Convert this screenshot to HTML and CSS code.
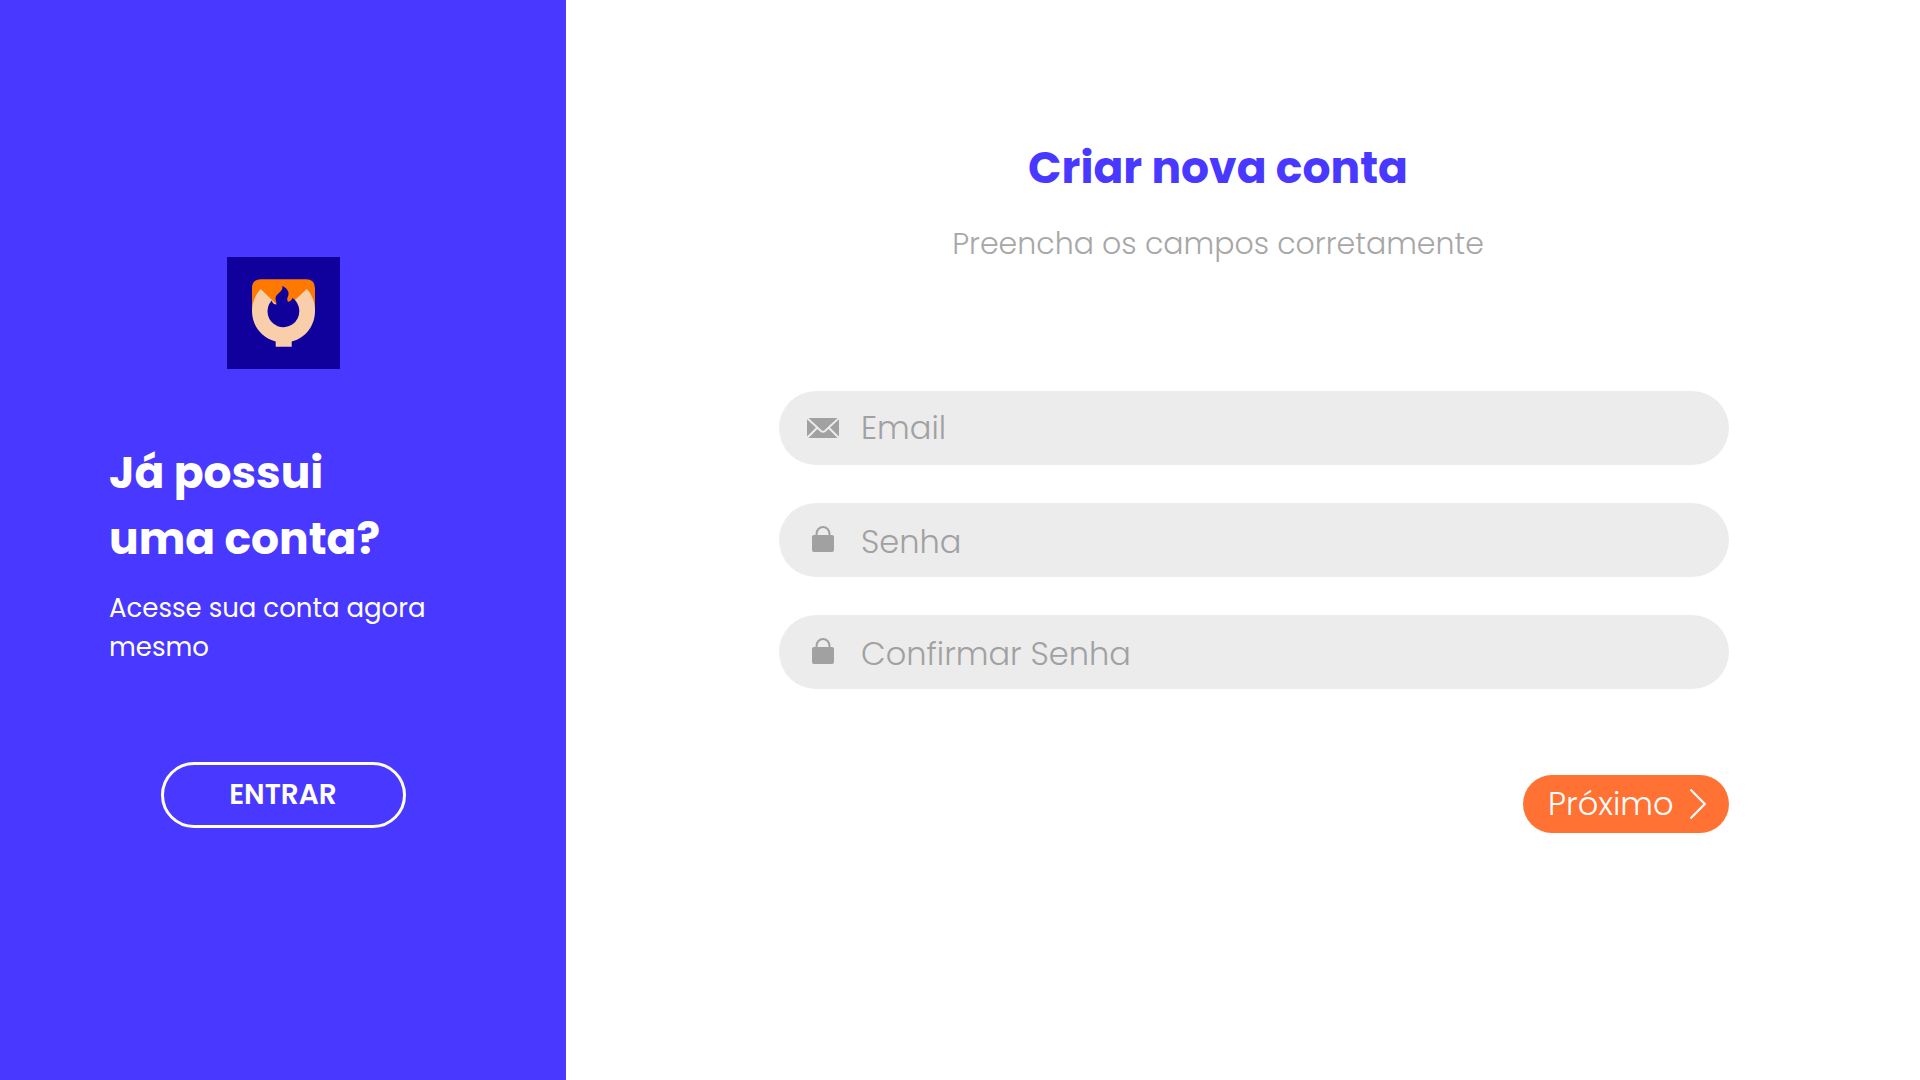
FILE: index.html
```html
<!DOCTYPE html>
<html lang="pt-BR">
<head>
<meta charset="utf-8">
<meta name="viewport" content="width=device-width, initial-scale=1">
<title>Criar nova conta</title>
<link rel="stylesheet" href="styles.css">
</head>
<body>
<div class="page">
  <aside class="sidebar">
    <svg class="logo" viewBox="0 0 113 112" role="img" aria-label="Logo">
      <rect width="113" height="112" fill="#10009c"/>
      <path d="M25 54V31.500Q25 22.300 34 22.300H79Q88 22.300 88 31.500V54Z" fill="#ff7800"/>
      <path d="M33.700 32L56.300 54L79.700 32C85.500 38 88 46 88 54C88 69 78 81.500 64.700 84.500V89.700H48.700V84.500C35 81 25 69 25 54C25 46 28 38 33.700 32Z" fill="#f8cfaa"/>
      <path d="M55.300 29C60 31 62.500 35 61.300 38.500C60 41.500 59.800 43 61 44.800C63 44.800 64.500 43.500 65.300 41C69.500 43.500 72.300 48.500 72.300 54A15.900 15.900 0 1 1 44.700 43.500C45.500 46 47 47.500 49.400 47.600C50 45.500 48 43.500 48.600 40.500C49.500 36 56.500 35 55.300 29Z" fill="#10009c"/>
    </svg>
    <div class="intro">
      <h2 class="intro-title">Já possui<br>uma conta?</h2>
      <p class="intro-text">Acesse sua conta agora mesmo</p>
    </div>
    <button class="login-button" type="button">ENTRAR</button>
  </aside>
  <main class="content">
    <header class="heading">
      <h1 class="title">Criar nova conta</h1>
      <p class="subtitle">Preencha os campos corretamente</p>
    </header>
    <form class="form">
      <label class="field">
        <svg class="field-icon" viewBox="0 0 32 32" aria-hidden="true">
          <rect y="6" width="32" height="20" fill="#a1a1a1"/>
          <path d="M0 6L14 19Q16 20.500 18 19L32 6M0 26L10.500 15.500M32 26L21.500 15.500" fill="none" stroke="#ececec" stroke-width="2"/>
        </svg>
        <input class="field-input" type="email" placeholder="Email" aria-label="Email">
      </label>
      <label class="field">
        <svg class="field-icon" viewBox="0 0 32 32" aria-hidden="true">
          <rect x="5" y="11" width="22" height="17" rx="2" fill="#a1a1a1"/>
          <path d="M9.500 12V10A6.500 7 0 0 1 22.500 10V12" fill="none" stroke="#a1a1a1" stroke-width="2"/>
        </svg>
        <input class="field-input field-input-password" type="password" placeholder="Senha" aria-label="Senha">
      </label>
      <label class="field">
        <svg class="field-icon" viewBox="0 0 32 32" aria-hidden="true">
          <rect x="5" y="11" width="22" height="17" rx="2" fill="#a1a1a1"/>
          <path d="M9.500 12V10A6.500 7 0 0 1 22.500 10V12" fill="none" stroke="#a1a1a1" stroke-width="2"/>
        </svg>
        <input class="field-input field-input-password" type="password" placeholder="Confirmar Senha" aria-label="Confirmar Senha">
      </label>
      <button class="next-button" type="submit">
        Próximo
        <svg class="next-icon" viewBox="0 0 16 30" aria-hidden="true">
          <path d="M1.200 1.200L14.800 15L1.200 28.800" fill="none" stroke="#fff" stroke-width="2.200" stroke-linecap="round" stroke-linejoin="round"/>
        </svg>
      </button>
    </form>
  </main>
</div>
</body>
</html>
```
FILE: styles.css
```css
* {
  box-sizing: border-box;
}

body {
  margin: 0;
  background: #fff;
  font-family: Poppins, Inter, "Open Sans", sans-serif;
}

h1,
h2,
p {
  margin: 0;
}

.page {
  display: grid;
  grid-template-columns: 566px 1fr;
  min-height: 100vh;
}

.sidebar {
  display: flex;
  flex-direction: column;
  align-items: center;
  padding: 257px 109px 80px;
  background: #4938ff;
  color: #fff;
}

.logo {
  width: 113px;
  height: 112px;
}

.intro {
  align-self: stretch;
  margin-top: 71px;
}

.intro-title {
  font-size: 44px;
  font-weight: 700;
  line-height: 66px;
}

.intro-text {
  margin-top: 17px;
  font-size: 26px;
  font-weight: 400;
  line-height: 39px;
}

.login-button {
  width: 245px;
  height: 66px;
  margin-top: 95px;
  border: 3px solid #fff;
  border-radius: 33px;
  background: transparent;
  color: #fff;
  font: inherit;
  font-size: 28px;
  font-weight: 600;
}

.content {
  padding: 135px 191px 80px 213px;
}

.heading {
  padding-right: 72px;
  text-align: center;
}

.title {
  color: #4938ff;
  font-size: 44px;
  font-weight: 700;
  line-height: 66px;
}

.subtitle {
  margin-top: 19px;
  color: #a7a7a7;
  font-size: 30px;
  font-weight: 300;
  line-height: 48px;
}

.form {
  display: flex;
  flex-direction: column;
  gap: 38px;
  margin-top: 123px;
}

.field {
  display: flex;
  align-items: center;
  gap: 22px;
  height: 74px;
  padding: 0 28px;
  border-radius: 37px;
  background: #ececec;
}

.field-icon {
  flex: none;
  width: 32px;
  height: 32px;
}

.field-input {
  flex: 1;
  min-width: 0;
  padding: 0;
  border: 0;
  outline: 0;
  background: transparent;
  color: #a1a1a1;
  font: inherit;
  font-size: 32px;
  font-weight: 300;
  line-height: 48px;
}

.field-input-password {
  padding-top: 4px;
}

.field-input::placeholder {
  color: #a1a1a1;
  opacity: 1;
}

.next-button {
  display: flex;
  align-items: center;
  justify-content: space-between;
  align-self: flex-end;
  width: 206px;
  height: 58px;
  margin-top: 48px;
  padding: 0 23px 0 25px;
  border: 0;
  border-radius: 29px;
  background: #ff7233;
  color: #fff;
  font: inherit;
  font-size: 32px;
  font-weight: 300;
}

.next-icon {
  width: 16px;
  height: 30px;
}
```
